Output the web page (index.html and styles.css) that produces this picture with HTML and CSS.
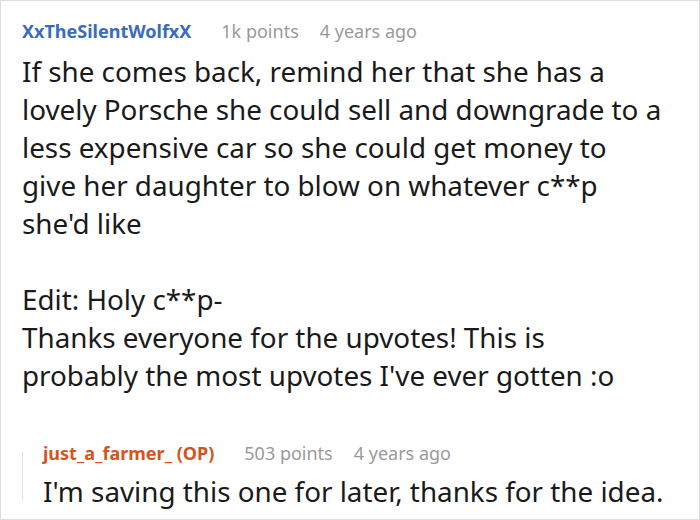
FILE: index.html
```html
<!DOCTYPE html>
<html>
<head>
<meta charset="utf-8">
<link rel="stylesheet" href="styles.css">
</head>
<body>
<div class="frame">
  <div class="meta">
    <span class="user">XxTheSilentWolfxX</span>
    <span class="info">1k points</span>
    <span class="info">4 years ago</span>
  </div>
  <div class="text">
    <p>If she comes back, remind her that she has a lovely Porsche she could sell and downgrade to a less expensive car so she could get money to give her daughter to blow on whatever c**p she'd like</p>
    <p class="blank">&nbsp;</p>
    <p>Edit: Holy c**p-<br>Thanks everyone for the upvotes! This is probably the most upvotes I've ever gotten :o</p>
  </div>
  <div class="reply">
    <div class="meta">
      <span class="user op">just_a_farmer_ (OP)</span>
      <span class="info">503 points</span>
      <span class="info">4 years ago</span>
    </div>
    <p class="rtext">I'm saving this one for later, thanks for the idea.</p>
  </div>
</div>
</body>
</html>
```
FILE: styles.css
```css
html, body {
  margin: 0;
  padding: 0;
  background: #fff;
}
.frame {
  width: 700px;
  height: 520px;
  box-sizing: border-box;
  border: 1px solid #dedede;
  padding: 18px 20px 0 21px;
  font-family: "Noto Sans", "Open Sans", sans-serif;
  color: #1a1a1a;
  overflow: hidden;
}
.meta {
  display: flex;
  gap: 21px;
  font-size: 18px;
  line-height: 24px;
}
.user {
  color: #3a6cbb;
  font-weight: 700;
  margin-right: 9px;
}
.user.op {
  color: #d4541e;
}
.info {
  color: #9a9a9a;
}
.text {
  width: 640px;
  margin-top: 9px;
  font-size: 27.8px;
  line-height: 38px;
}
.text p {
  margin: 0;
}
.reply {
  margin-top: 47px;
  padding-left: 21px;
  background: linear-gradient(#e2e2e2, #e2e2e2) no-repeat 0 11px / 1px 49px;
}
.rtext {
  margin: 0;
  padding-top: 7px;
  font-size: 27.8px;
  line-height: 38px;
}
```
